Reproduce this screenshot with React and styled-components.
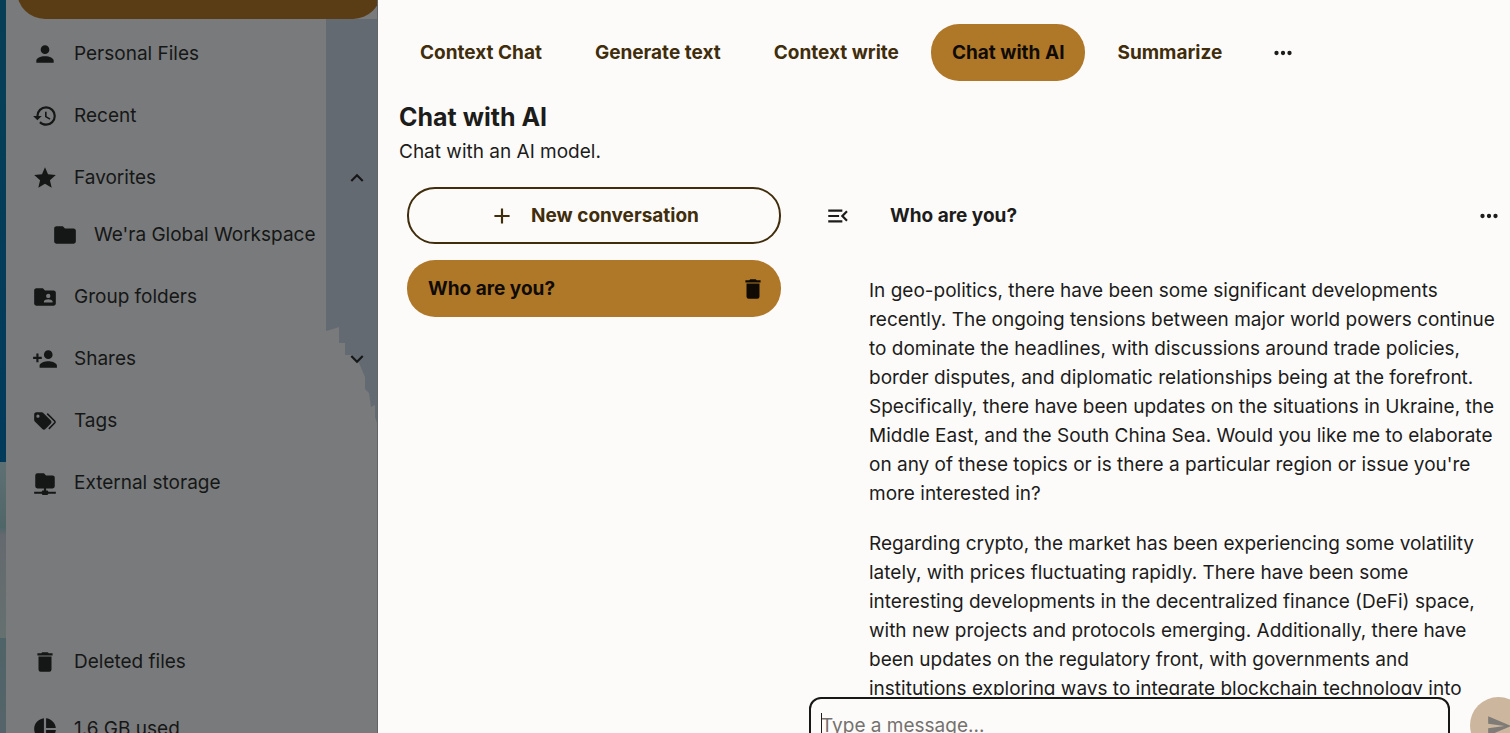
import React from 'react'
import styled, { createGlobalStyle } from 'styled-components'

const color = {
  paper: '#fdfbf9',
  text: '#1c1c1b',
  accent: '#af7829',
  accentText: '#0f0b04',
  brown: '#3f2d0c',
  dimmed: '#797a7b',
  dimmedAccent: '#5a3d15',
  dimmedText: '#151717',
}

const icons = {
  account:
    'M12,4A4,4 0 0,1 16,8A4,4 0 0,1 12,12A4,4 0 0,1 8,8A4,4 0 0,1 12,4M12,14C16.42,14 20,15.79 20,18V20H4V18C4,15.79 7.58,14 12,14Z',
  history:
    'M13.5,8H12V13L16.28,15.54L17,14.33L13.5,12.25V8M13,3A9,9 0 0,0 4,12H1L4.96,16.03L9,12H6A7,7 0 0,1 13,5A7,7 0 0,1 20,12A7,7 0 0,1 13,19C11.07,19 9.32,18.21 8.06,16.94L6.64,18.36C8.27,20 10.5,21 13,21A9,9 0 0,0 22,12A9,9 0 0,0 13,3',
  star:
    'M12,17.27L18.18,21L16.54,13.97L22,9.24L14.81,8.62L12,2L9.19,8.62L2,9.24L7.45,13.97L5.82,21L12,17.27Z',
  folder:
    'M10,4H4C2.89,4 2,4.89 2,6V18A2,2 0 0,0 4,20H20A2,2 0 0,0 22,18V8C22,6.89 21.1,6 20,6H12L10,4Z',
  folderAccount:
    'M19,17H11V16C11,14.67 13.67,14 15,14C16.33,14 19,14.67 19,16M15,9A2,2 0 0,1 17,11A2,2 0 0,1 15,13A2,2 0 0,1 13,11C13,9.89 13.9,9 15,9M20,6H12L10,4H4C2.89,4 2,4.89 2,6V18A2,2 0 0,0 4,20H20A2,2 0 0,0 22,18V8C22,6.89 21.1,6 20,6Z',
  accountPlus:
    'M15,14C12.33,14 7,15.33 7,18V20H23V18C23,15.33 17.67,14 15,14M6,10V7H4V10H1V12H4V15H6V12H9V10M15,12A4,4 0 0,0 19,8A4,4 0 0,0 15,4A4,4 0 0,0 11,8A4,4 0 0,0 15,12Z',
  tags:
    'M5.5,9A1.5,1.5 0 0,0 7,7.5A1.5,1.5 0 0,0 5.5,6A1.5,1.5 0 0,0 4,7.5A1.5,1.5 0 0,0 5.5,9M17.41,11.58C17.77,11.94 18,12.44 18,13C18,13.55 17.78,14.05 17.41,14.41L12.41,19.41C12.05,19.77 11.55,20 11,20C10.45,20 9.95,19.78 9.58,19.41L2.59,12.42C2.22,12.05 2,11.55 2,11V6C2,4.89 2.89,4 4,4H9C9.55,4 10.05,4.22 10.41,4.58L17.41,11.58M13.54,5.71L14.54,4.71L21.41,11.58C21.78,11.94 22,12.45 22,13C22,13.55 21.78,14.05 21.42,14.41L16.04,19.79L15.04,18.79L20.75,13L13.54,5.71Z',
  folderNetwork:
    'M3,15V5A2,2 0 0,1 5,3H11L13,5H19A2,2 0 0,1 21,7V15A2,2 0 0,1 19,17H13V19H14A1,1 0 0,1 15,20H22V22H15A1,1 0 0,1 14,23H10A1,1 0 0,1 9,22H2V20H9A1,1 0 0,1 10,19H11V17H5A2,2 0 0,1 3,15Z',
  trash:
    'M19,4H15.5L14.5,3H9.5L8.5,4H5V6H19M6,19A2,2 0 0,0 8,21H16A2,2 0 0,0 18,19V7H6V19Z',
  pie:
    'M11,2V22C5.9,21.5 2,17.2 2,12C2,6.8 5.9,2.5 11,2M13,2V11H22C21.5,6.2 17.8,2.5 13,2M13,13V22C17.7,21.5 21.5,17.8 22,13H13Z',
  plus: 'M19,13H13V19H11V13H5V11H11V5H13V11H19V13Z',
  menuOpen:
    'M21,15.61L19.59,17L14.58,12L19.59,7L21,8.39L17.44,12L21,15.61M3,6H16V8H3V6M3,13V11H13V13H3M3,18V16H16V18H3Z',
  dots:
    'M16,12A2,2 0 0,1 18,10A2,2 0 0,1 20,12A2,2 0 0,1 18,14A2,2 0 0,1 16,12M10,12A2,2 0 0,1 12,10A2,2 0 0,1 14,12A2,2 0 0,1 12,14A2,2 0 0,1 10,12M4,12A2,2 0 0,1 6,10A2,2 0 0,1 8,12A2,2 0 0,1 6,14A2,2 0 0,1 4,12Z',
  send: 'M2,21L23,12L2,3V10L17,12L2,14V21Z',
  up: 'M7.41,15.41L12,10.83L16.59,15.41L18,14L12,8L6,14L7.41,15.41Z',
  down: 'M7.41,8.58L12,13.17L16.59,8.58L18,10L12,16L6,10L7.41,8.58Z',
}

const Icon = ({ name, size = 26 }) => (
  <IconSvg width={size} height={size} viewBox="0 0 24 24" aria-hidden="true">
    <path d={icons[name]} />
  </IconSvg>
)

const files = [
  { icon: 'account', label: 'Personal Files' },
  { icon: 'history', label: 'Recent' },
  {
    icon: 'star',
    label: 'Favorites',
    toggle: 'up',
    children: [{ icon: 'folder', label: "We'ra Global Workspace" }],
  },
  { icon: 'folderAccount', label: 'Group folders' },
  { icon: 'accountPlus', label: 'Shares', toggle: 'down' },
  { icon: 'tags', label: 'Tags' },
  { icon: 'folderNetwork', label: 'External storage' },
]

const tabs = [
  'Context Chat',
  'Generate text',
  'Context write',
  'Chat with AI',
  'Summarize',
]

const messages = [
  "In geo-politics, there have been some significant developments recently. The ongoing tensions between major world powers continue to dominate the headlines, with discussions around trade policies, border disputes, and diplomatic relationships being at the forefront. Specifically, there have been updates on the situations in Ukraine, the Middle East, and the South China Sea. Would you like me to elaborate on any of these topics or is there a particular region or issue you're more interested in?",
  'Regarding crypto, the market has been experiencing some volatility lately, with prices fluctuating rapidly. There have been some interesting developments in the decentralized finance (DeFi) space, with new projects and protocols emerging. Additionally, there have been updates on the regulatory front, with governments and institutions exploring ways to integrate blockchain technology into',
]

const NavEntry = ({ icon, label, toggle, nested }) => (
  <NavRow>
    <NavLink href="#" $nested={nested}>
      <Icon name={icon} />
      {label}
    </NavLink>
    {toggle && (
      <Toggle type="button" aria-label={`Toggle ${label}`}>
        <Icon name={toggle} />
      </Toggle>
    )}
  </NavRow>
)

export default function App() {
  return (
    <Page>
      <GlobalStyle />
      <Wallpaper />
      <Sidebar>
        <Shade viewBox="0 0 51 404" aria-hidden="true">
          <path d="M0,0H51V404L49,398V386L45,388L43,374L39,370V358L33,344L26,338V336H19V324H13V308L7,310L0,312Z" />
        </Shade>
        <ActiveRow />
        <NavList>
          {files.map(({ children, ...item }) => (
            <li key={item.label}>
              <NavEntry {...item} />
              {children &&
                children.map(child => (
                  <NavEntry key={child.label} {...child} nested />
                ))}
            </li>
          ))}
        </NavList>
        <NavFooter>
          <NavEntry icon="trash" label="Deleted files" />
          <NavEntry icon="pie" label="1.6 GB used" />
        </NavFooter>
      </Sidebar>

      <Assistant>
        <Tabs>
          {tabs.map(tab => (
            <Tab key={tab} type="button" $active={tab === 'Chat with AI'}>
              {tab}
            </Tab>
          ))}
          <IconButton type="button" aria-label="More">
            <Icon name="dots" />
          </IconButton>
        </Tabs>
        <Title>Chat with AI</Title>
        <Subtitle>Chat with an AI model.</Subtitle>

        <Columns>
          <Conversations>
            <NewButton type="button">
              <Icon name="plus" />
              New conversation
            </NewButton>
            <Conversation>
              <ConversationLink href="#">Who are you?</ConversationLink>
              <IconButton type="button" aria-label="Delete conversation">
                <Icon name="trash" />
              </IconButton>
            </Conversation>
          </Conversations>

          <Chat>
            <ChatHeader>
              <IconButton type="button" aria-label="Collapse conversations">
                <Icon name="menuOpen" />
              </IconButton>
              <ChatTitle>Who are you?</ChatTitle>
              <IconButton type="button" aria-label="Conversation actions">
                <Icon name="dots" />
              </IconButton>
            </ChatHeader>
            <Messages>
              {messages.map(text => (
                <p key={text}>{text}</p>
              ))}
            </Messages>
            <Composer>
              <Caret />
              <MessageInput
                rows={1}
                aria-label="Message"
                placeholder="Type a message..."
              />
              <SendButton type="button" aria-label="Send">
                <Icon name="send" />
              </SendButton>
            </Composer>
          </Chat>
        </Columns>
      </Assistant>
    </Page>
  )
}

const GlobalStyle = createGlobalStyle`
  *, *::before, *::after {
    box-sizing: border-box;
  }

  body {
    margin: 0;
    color: ${color.text};
    background: ${color.paper};
    font-family: Inter, 'Liberation Sans', sans-serif;
    font-size: 19px;
    line-height: 29px;
  }

  button, textarea {
    font: inherit;
    color: inherit;
  }

  button {
    padding: 0;
    border: 0;
    background: none;
  }

  a {
    color: inherit;
    text-decoration: none;
  }
`

const IconSvg = styled.svg`
  display: block;
  flex: none;
  fill: currentColor;
`

const Page = styled.div`
  display: flex;
  height: 100vh;
  overflow: clip;
`

const Wallpaper = styled.div`
  flex: 0 0 6px;
  background: linear-gradient(
    #063f55,
    #023a5c 63%,
    #5f7074 63%,
    #4f6668 72%,
    #64696f 73%,
    #66706f 87%,
    #4f6468 87%,
    #55646a
  );
`

const Sidebar = styled.nav`
  position: relative;
  display: flex;
  flex-direction: column;
  flex: 0 0 372px;
  overflow: clip;
  color: ${color.dimmedText};
  background: ${color.dimmed};
  border-right: 1px solid #626466;
`

const Shade = styled.svg`
  position: absolute;
  top: 19px;
  right: 0;
  width: 51px;
  fill: #646a72;
`

/* the selected row is scrolled mostly out of view */
const ActiveRow = styled.div`
  position: relative;
  flex: none;
  height: 57px;
  margin: -38px -4px 0 11px;
  border-radius: 28px;
  background: ${color.dimmedAccent};
`

const NavList = styled.ul`
  position: relative;
  display: flex;
  flex-direction: column;
  gap: 5px;
  margin: 0;
  padding: 6px 0 0;
  list-style: none;
`

const NavFooter = styled.div`
  display: flex;
  flex-direction: column;
  gap: 10px;
  margin-top: auto;
  margin-bottom: -24px;
`

const NavRow = styled.div`
  display: flex;
  align-items: center;
  height: 57px;
`

const NavLink = styled.a`
  display: flex;
  flex: 1;
  align-items: center;
  gap: 16px;
  padding-left: ${props => (props.$nested ? 46 : 26)}px;
  white-space: nowrap;
`

const Toggle = styled.button`
  margin-right: 7px;
`

const Assistant = styled.main`
  display: flex;
  flex: 1;
  flex-direction: column;
  min-width: 0;
  padding: 24px 0 0 21px;
`

const Tabs = styled.div`
  display: flex;
  gap: 11px;
`

const Tab = styled.button`
  height: 57px;
  padding: 0 21px;
  border-radius: 28px;
  font-weight: 700;
  white-space: nowrap;
  color: ${props => (props.$active ? color.accentText : color.brown)};
  background: ${props => (props.$active ? color.accent : 'transparent')};
`

const IconButton = styled.button`
  display: flex;
  flex: none;
  align-items: center;
  justify-content: center;
  width: 57px;
  height: 57px;
  border-radius: 50%;
`

const Title = styled.h2`
  margin: 18px 0 0;
  font-size: 25px;
  line-height: 36px;
`

const Subtitle = styled.p`
  margin: 2px 0 0;
`

const Columns = styled.div`
  display: flex;
  flex: 1;
  gap: 20px;
  min-height: 0;
  padding-top: 21px;
`

const Conversations = styled.div`
  display: flex;
  flex: 0 0 390px;
  flex-direction: column;
  gap: 16px;
  padding: 0 8px;
`

const NewButton = styled.button`
  display: flex;
  align-items: center;
  justify-content: center;
  gap: 16px;
  height: 57px;
  border: 2px solid ${color.brown};
  border-radius: 28px;
  font-weight: 700;
  color: ${color.brown};
`

const Conversation = styled.div`
  display: flex;
  align-items: center;
  height: 57px;
  border-radius: 28px;
  color: ${color.accentText};
  background: ${color.accent};
`

const ConversationLink = styled.a`
  flex: 1;
  padding-left: 21px;
  font-weight: 700;
`

/* runs past the right and bottom edges of the window */
const Chat = styled.section`
  display: flex;
  flex: 1;
  flex-direction: column;
  min-width: 0;
  margin: 0 -17px -21px 0;
`

const ChatHeader = styled.header`
  display: flex;
  align-items: center;
  padding-right: 10px;
`

const ChatTitle = styled.h3`
  flex: 1;
  margin: 0;
  padding-left: 24px;
  font-size: 19px;
  line-height: 29px;
`

const Messages = styled.div`
  flex: 1;
  min-height: 0;
  margin: 32px 30px 2px 60px;
  overflow: hidden;

  p {
    margin: 0 0 21px;
  }
`

const Composer = styled.form`
  position: relative;
  display: flex;
  gap: 20px;
`

const Caret = styled.span`
  position: absolute;
  top: 16px;
  left: 12px;
  width: 1px;
  height: 24px;
  background: ${color.text};
`

const MessageInput = styled.textarea`
  flex: 1;
  height: 57px;
  padding: 12px 10px;
  border: 2px solid #171716;
  border-radius: 12px;
  outline: 0;
  resize: none;
  background: ${color.paper};

  &::placeholder {
    color: #74726f;
    opacity: 1;
  }
`

const SendButton = styled(IconButton)`
  color: #7f7c77;
  background: #cdb69e;
`
